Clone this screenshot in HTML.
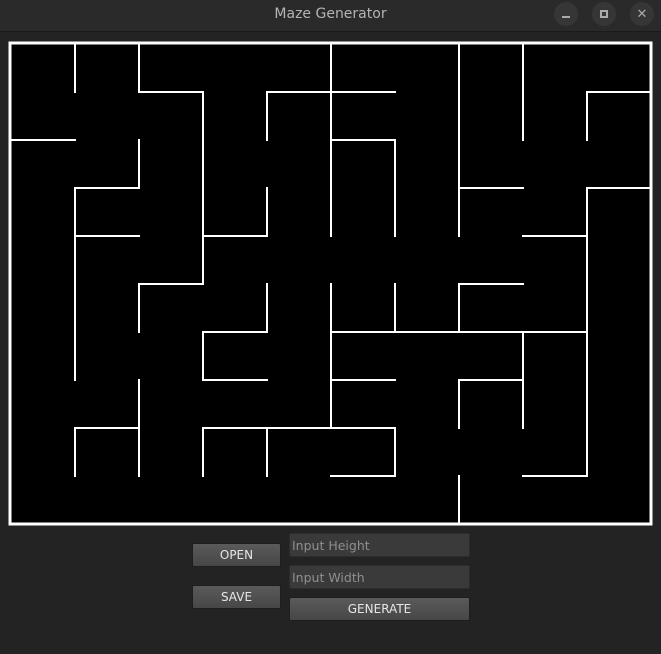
<!DOCTYPE html>
<html><head><meta charset="utf-8"><style>
*{margin:0;padding:0;box-sizing:border-box}
body{width:661px;height:654px;background:#232323;position:relative;overflow:hidden;font-family:"Liberation Sans","DejaVu Sans",sans-serif}
.tb{position:absolute;left:0;top:0;width:661px;height:32px;background:#2a2a2a;border-bottom:1px solid #1a1a1a}
.title{position:absolute;left:0;width:661px;top:6px;text-align:center;color:#b4b4b4;font-size:14px;font-weight:normal;font-family:"DejaVu Sans",sans-serif}
.c{position:absolute;top:2px;width:24px;height:24px;border-radius:50%;background:#363636}
.btn{position:absolute;border:1px solid #1e1e1e;border-radius:2px;background:linear-gradient(#5a5a5a,#474747);color:#e6e6e6;font-size:12px;text-align:center;font-family:"DejaVu Sans",sans-serif}
.inp{position:absolute;background:#3a3a3a;border:1px solid #2c2c2c;border-radius:2px;color:#8f8f8f;font-size:12.5px;padding-left:2px;font-family:"DejaVu Sans",sans-serif}
</style></head><body>
<div class="tb"><div class="title">Maze Generator</div>
<div class="c" style="left:554px"><div style="position:absolute;left:8px;top:14px;width:8px;height:2px;background:#aaa"></div></div>
<div class="c" style="left:592px"><div style="position:absolute;left:8px;top:8px;width:8px;height:8px;border:2px solid #aaa"></div></div>
<div class="c" style="left:630px;color:#aaa;font-size:13px;font-weight:bold;text-align:center;line-height:24px">✕</div>
</div>
<svg style="position:absolute;left:0;top:0" width="661" height="654">
<rect x="10" y="43" width="641" height="481" fill="#000" stroke="#fff" stroke-width="3"/>
<g stroke="#fff" stroke-width="2" fill="none" stroke-linecap="square">
<path d="M75 43V92 M139 43V92 H203 V284 M267 140V92 H395 M331 43V236 M331 140H395V236 M10 140H75 M139 140V188H75V380 M75 236H139 M203 236H267V188 M139 332V284H203 M267 284V332 M331 284V428 M459 43V236 M523 43V140 M587 140V92H651 M459 188H523 M523 236H587 M651 188H587V476H523 M395 284V332 M331 332H587 M459 332V284H523 M331 380H395 M459 428V380H523 M523 332V428 M331 476H395V428H203V476 M267 428V476 M203 332H267 M203 332V380H267 M139 380V476 M75 476V428H139 M459 476V524"/>
</g>
</svg>
<div class="btn" style="left:192px;top:543px;width:89px;height:24px;line-height:22px">OPEN</div>
<div class="btn" style="left:192px;top:585px;width:89px;height:24px;line-height:22px">SAVE</div>
<div class="inp" style="left:289px;top:533px;width:181px;height:24px;line-height:23px">Input Height</div>
<div class="inp" style="left:289px;top:565px;width:181px;height:24px;line-height:23px">Input Width</div>
<div class="btn" style="left:289px;top:597px;width:181px;height:24px;line-height:22px">GENERATE</div>
</body></html>
